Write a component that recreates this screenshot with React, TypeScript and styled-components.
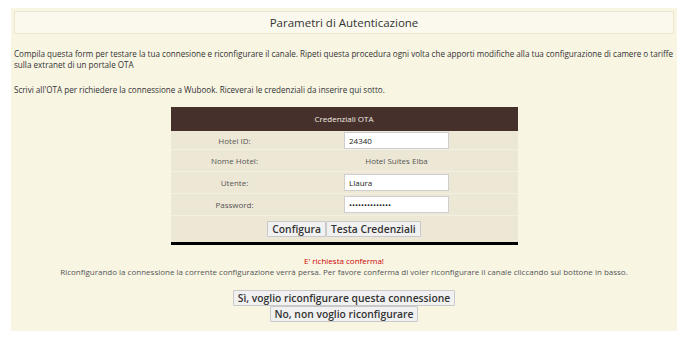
import React from "react";
import styled, { createGlobalStyle } from "styled-components";

const GlobalStyle = createGlobalStyle`
    body {
        margin: 0;
        background: #ffffff;
        font-family: "Open Sans", "DejaVu Sans", sans-serif;
    }
`;

const rows = [
    { label: "Hotel ID:", value: "24340", input: true },
    { label: "Nome Hotel:", value: "Hotel Suites Elba", input: false },
    { label: "Utente:", value: "Llaura", input: true },
    { label: "Password:", value: "passwordpasswo", input: true, password: true },
];

export default function App() {
    return (
        <Page>
            <GlobalStyle />
            <Panel>
                <TitleBox>Parametri di Autenticazione</TitleBox>
                <Text>
                    Compila questa form per testare la tua connesione e riconfigurare il canale. Ripeti questa procedura ogni volta che apporti modifiche alla tua configurazione di camere o tariffe sulla extranet di un portale OTA
                </Text>
                <Text>Scrivi all'OTA per richiedere la connessione a Wubook. Riceverai le credenziali da inserire qui sotto.</Text>

                <Table>
                    <TableHead>Credenziali OTA</TableHead>
                    {rows.map((r) => (
                        <Row key={r.label}>
                            <Label>{r.label}</Label>
                            <Value>
                                {r.input ? (
                                    <Field type={r.password ? "password" : "text"} defaultValue={r.value} />
                                ) : (
                                    <Plain>{r.value}</Plain>
                                )}
                            </Value>
                        </Row>
                    ))}
                    <ButtonRow>
                        <Button>Configura</Button>
                        <Button>Testa Credenziali</Button>
                    </ButtonRow>
                </Table>

                <Confirm>
                    <Warning>E' richiesta conferma!</Warning>
                    <Note>Riconfigurando la connessione la corrente configurazione verrà persa. Per favore conferma di voler riconfigurare il canale cliccando sul bottone in basso.</Note>
                    <Choices>
                        <Button>Sì, voglio riconfigurare questa connessione</Button>
                        <Button>No, non voglio riconfigurare</Button>
                    </Choices>
                </Confirm>
            </Panel>
        </Page>
    );
}

const Page = styled.div`
    padding: 8px 9px 12px 11px;
`;

const Panel = styled.div`
    background: #f8f5e3;
    padding: 3px 3px 9px;
`;

const TitleBox = styled.div`
    height: 23px;
    box-sizing: border-box;
    border: 1px solid #ece7cf;
    background: #fbf9ee;
    color: #333333;
    font-size: 11.5px;
    line-height: 21px;
    text-align: center;
`;

const Text = styled.p`
    margin: 14px 0 0;
    font-size: 8.1px;
    line-height: 11px;
    color: #333333;
    & + & {
        margin-top: 14px;
    }
`;

const Table = styled.div`
    width: 347px;
    margin: 12px auto 0;
    background: #ede8d5;
    border-bottom: 3px solid #000000;
    font-size: 8px;
    color: #555555;
`;

const TableHead = styled.div`
    height: 24px;
    line-height: 24px;
    background: #45302c;
    color: #f3ede0;
    text-align: center;
`;

const Row = styled.div`
    display: grid;
    grid-template-columns: 128px 196px 1fr;
    align-items: center;
    min-height: 21px;
    border-bottom: 1px solid #f3efe2;
    &:first-of-type {
        min-height: 24px;
    }
    &:nth-of-type(2) {
        min-height: 18px;
    }
`;

const Label = styled.div`
    text-align: center;
`;

const Value = styled.div`
    display: flex;
    justify-content: center;
`;

const Plain = styled.span`
    color: #555555;
`;

const Field = styled.input`
    width: 105px;
    height: 17px;
    box-sizing: border-box;
    border: 1px solid #cfcfcf;
    background: #ffffff;
    padding: 0 4px;
    font-family: "Open Sans", sans-serif;
    font-size: 8px;
    color: #222222;
    outline: none;
`;

const ButtonRow = styled.div`
    display: flex;
    justify-content: center;
    align-items: flex-start;
    height: 26px;
    padding-top: 5px;
    box-sizing: border-box;
`;

const Button = styled.button`
    height: 16px;
    padding: 0 4px;
    border: 1px solid #c9c9c9;
    border-radius: 1px;
    background: #f1f1f1;
    font-family: "Open Sans", sans-serif;
    font-weight: 600;
    font-size: 10.3px;
    color: #333333;
    line-height: 14px;
`;

const Confirm = styled.div`
    margin-top: 10px;
    text-align: center;
`;

const Warning = styled.div`
    color: #cc0000;
    font-size: 8px;
    line-height: 11px;
`;

const Note = styled.div`
    color: #555555;
    font-size: 8px;
    line-height: 11px;
`;

const Choices = styled.div`
    display: flex;
    flex-direction: column;
    align-items: center;
    margin-top: 13px;
`;
